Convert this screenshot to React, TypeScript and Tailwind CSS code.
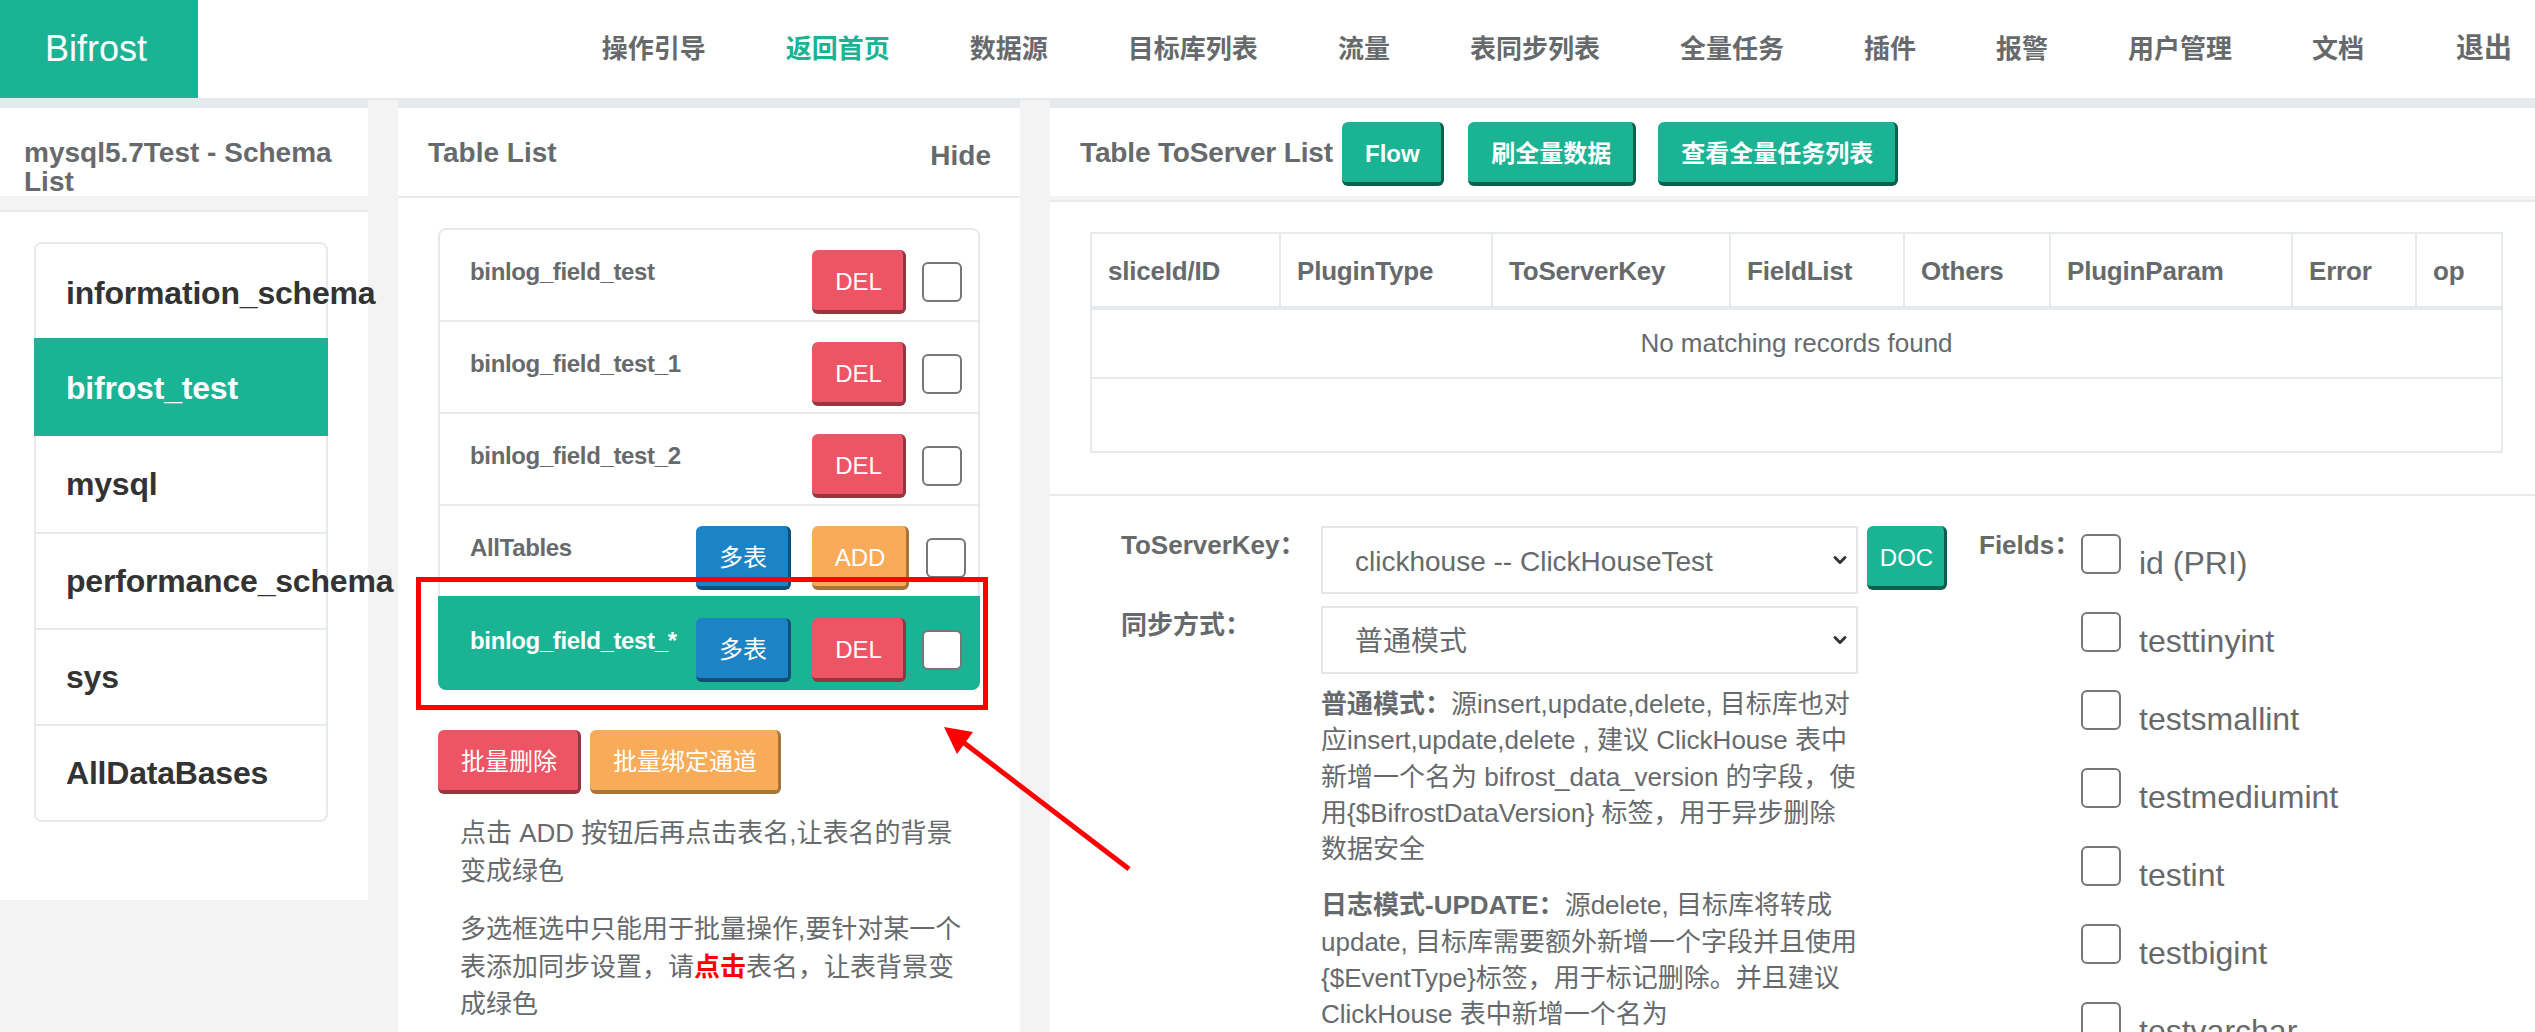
import { ChevronDown } from 'lucide-react';

const NAV_ITEMS = ['操作引导', '返回首页', '数据源', '目标库列表', '流量', '表同步列表', '全量任务', '插件', '报警', '用户管理', '文档'];
const SCHEMAS = ['information_schema', 'bifrost_test', 'mysql', 'performance_schema', 'sys', 'AllDataBases'];
const FIELDS = ['id (PRI)', 'testtinyint', 'testsmallint', 'testmediumint', 'testint', 'testbigint', 'testvarchar'];

const TONES = {
  teal: 'bg-[#1ab394] border-[#0c5e4d]',
  red: 'bg-[#ed5565] border-[#953742]',
  blue: 'bg-[#1c84c6] border-[#0f4f78]',
  orange: 'bg-[#f8ac59] border-[#a7743c]',
} as const;

function Btn({ tone, className = '', children }: { tone: keyof typeof TONES; className?: string; children: React.ReactNode }) {
  return (
    <button className={`h-[64px] shrink-0 rounded-[6px] border-r-[3px] border-b-[4px] pt-[4px] pl-[2px] text-[24px] text-white ${TONES[tone]} ${className}`}>
      {children}
    </button>
  );
}

function Check({ className = '' }: { className?: string }) {
  return (
    <input
      type="checkbox"
      className={`h-[40px] w-[40px] shrink-0 appearance-none rounded-[6px] border-2 border-[#777] bg-white ${className}`}
    />
  );
}

function Select({ value }: { value: string }) {
  return (
    <div className="relative w-[537px]">
      <select className="h-[68px] w-full appearance-none border-2 border-[#e5e6e7] bg-white pt-[3px] pl-[32px] text-[28px]">
        <option>{value}</option>
      </select>
      <ChevronDown className="pointer-events-none absolute top-[24px] right-[8px] h-[20px] w-[20px] text-[#333]" strokeWidth={3.5} />
    </div>
  );
}

function TableRow({ name, active = false, first = false, children }: { name: string; active?: boolean; first?: boolean; children: React.ReactNode }) {
  return (
    <div
      className={`-mb-[2px] flex h-[94px] items-start border-2 pt-[20px] pl-[30px] ${
        active ? 'rounded-b-[8px] border-[#1ab394] bg-[#1ab394] text-white' : 'border-[#e7eaec] text-[#676a6c]'
      } ${first ? 'rounded-t-[8px]' : ''}`}
    >
      <span className={`flex-1 text-[24px] font-bold tracking-[-0.35px] ${active ? 'leading-[45px]' : 'leading-[43px]'}`}>{name}</span>
      {children}
    </div>
  );
}

function Delete() {
  return (
    <>
      <Btn tone="red" className="w-[94px]">DEL</Btn>
      <Check className="mt-[12px] mr-[16px] ml-[16px]" />
    </>
  );
}

export default function App() {
  return (
    <div className="relative flex h-[1032px] w-full flex-col overflow-hidden bg-[#f3f3f4] font-['Liberation_Sans','Noto_Sans_CJK_SC',sans-serif] text-[#676a6c]">
      <nav className="flex h-[100px] shrink-0 items-center justify-between border-b-2 border-[#e7eaec] bg-white">
        <div className="flex h-[98px] w-[198px] items-center bg-[#1ab394] pl-[45px] text-[36px] text-white">Bifrost</div>
        <div className="flex items-center gap-[80px] pr-[23px] text-[26px] font-semibold">
          {NAV_ITEMS.map((item) => (
            <a key={item} className={item === '返回首页' ? 'text-[#1ab394]' : ''}>{item}</a>
          ))}
          <a className="ml-[12px] text-[28px]">退出</a>
        </div>
      </nav>

      <div className="flex min-h-0 flex-1 gap-[30px]">
        <aside className="w-[368px] shrink-0 self-start border-t-8 border-[#e7eaec]">
          <div className="h-[88px] bg-white pt-[30px] pl-[24px] text-[28px] leading-[29px] font-bold">
            mysql5.7Test - Schema<br />List
          </div>
          <div className="mt-[14px] h-[690px] border-t-2 border-[#e7eaec] bg-white pt-[30px] pl-[34px]">
            <div className="w-[294px] rounded-[8px] border-2 border-[#e7eaec]">
              {SCHEMAS.map((schema, i) => (
                <div
                  key={schema}
                  className={`flex items-center whitespace-nowrap text-[32px] font-bold tracking-[-0.2px] ${
                    schema === 'bifrost_test' ? '-mx-[2px] h-[98px] bg-[#1ab394] pt-[2px] pl-[32px] text-white' : 'pl-[30px] text-[#333]'
                  } ${i === 0 ? 'h-[94px] pt-[4px]' : ''} ${i > 1 ? 'h-[96px]' : ''} ${i > 2 ? 'border-t-2 border-[#e7eaec]' : ''}`}
                >
                  {schema}
                </div>
              ))}
            </div>
          </div>
        </aside>

        <section className="w-[622px] shrink-0 border-t-8 border-[#e7eaec] bg-white">
          <div className="flex h-[90px] justify-between border-b-2 border-[#e7eaec] pr-[29px] pl-[30px]">
            <span className="pt-[30px] text-[28px] leading-[29px] font-bold">Table List</span>
            <span className="pt-[33px] text-[28px] leading-[29px] font-bold">Hide</span>
          </div>
          <div className="pt-[30px] pl-[40px]">
            <div className="w-[542px]">
              <TableRow name="binlog_field_test" first><Delete /></TableRow>
              <TableRow name="binlog_field_test_1"><Delete /></TableRow>
              <TableRow name="binlog_field_test_2"><Delete /></TableRow>
              <TableRow name="AllTables">
                <Btn tone="blue" className="mr-[21px] w-[95px]">多表</Btn>
                <Btn tone="orange" className="w-[97px]">ADD</Btn>
                <Check className="mt-[12px] mr-[12px] ml-[17px]" />
              </TableRow>
              <TableRow name="binlog_field_test_*" active>
                <Btn tone="blue" className="mr-[21px] w-[95px]">多表</Btn>
                <Delete />
              </TableRow>
            </div>
            <div className="mt-[42px] flex gap-[9px]">
              <Btn tone="red" className="w-[143px]">批量删除</Btn>
              <Btn tone="orange" className="w-[191px]">批量绑定通道</Btn>
            </div>
            <p className="mt-[21px] w-[516px] pl-[22px] text-[26px] leading-[37.5px]">
              点击 ADD 按钮后再点击表名,让表名的背景变成绿色
            </p>
            <p className="mt-[21px] w-[530px] pl-[22px] text-[26px] leading-[37.5px]">
              多选框选中只能用于批量操作,要针对某一个表添加同步设置，请<b className="text-[#f00]">点击</b>表名，让表背景变成绿色
            </p>
          </div>
        </section>

        <section className="min-w-0 flex-1 border-t-8 border-[#e7eaec] bg-white">
          <div className="flex h-[88px] items-start gap-[9px] pt-[14px] pl-[30px]">
            <span className="pt-[16px] text-[28px] leading-[29px] font-bold tracking-[-0.15px]">Table ToServer List</span>
            <Btn tone="teal" className="w-[102px] font-bold">Flow</Btn>
            <Btn tone="teal" className="ml-[15px] w-[168px] font-bold">刷全量数据</Btn>
            <Btn tone="teal" className="ml-[13px] w-[240px] font-bold">查看全量任务列表</Btn>
          </div>
          <div className="h-[4px] bg-[#f3f3f4]" />
          <div className="h-[296px] border-t-2 border-b-2 border-[#e7eaec] pt-[30px] pl-[40px]">
            <table className="w-[1411px] table-fixed border-collapse text-[26px]">
              <thead className="[&_th]:border-x-2 [&_th]:border-[#e7eaec] [&_th]:pt-[2px] [&_th]:pl-[16px] [&_th]:text-left [&_th]:tracking-[-0.2px]">
                <tr className="h-[75px] border-2 border-b-4 border-[#e7eaec]">
                  <th className="w-[189px]">sliceId/ID</th>
                  <th className="w-[212px]">PluginType</th>
                  <th className="w-[238px]">ToServerKey</th>
                  <th className="w-[174px]">FieldList</th>
                  <th className="w-[146px]">Others</th>
                  <th className="w-[242px]">PluginParam</th>
                  <th className="w-[124px]">Error</th>
                  <th className="w-[86px]">op</th>
                </tr>
              </thead>
              <tbody>
                <tr className="h-[70px] border-2 border-[#e7eaec]">
                  <td colSpan={8} className="text-center">No matching records found</td>
                </tr>
                <tr className="h-[74px] border-2 border-[#e7eaec]">
                  <td colSpan={8} />
                </tr>
              </tbody>
            </table>
          </div>

          <div className="flex pt-[30px] pl-[71px]">
            <div className="w-[858px] shrink-0">
              <div className="flex items-start">
                <label className="w-[200px] text-[26px] leading-[38px] font-bold">ToServerKey：</label>
                <Select value="clickhouse -- ClickHouseTest" />
                <Btn tone="teal" className="ml-[9px] w-[80px]">DOC</Btn>
              </div>
              <div className="mt-[12px] flex items-start">
                <label className="w-[200px] text-[26px] leading-[38px] font-bold">同步方式：</label>
                <Select value="普通模式" />
              </div>
              <div className="mt-[12px] ml-[200px] w-[545px] text-[26px] leading-[36.3px]">
                <p>
                  <b>普通模式：</b>源insert,update,delete, 目标库也对<br />
                  应insert,update,delete , 建议 ClickHouse 表中<br />
                  新增一个名为 bifrost_data_version 的字段，使<br />
                  用{'{$BifrostDataVersion}'} 标签，用于异步删除<br />
                  数据安全
                </p>
                <p className="mt-[20px]">
                  <b>日志模式-UPDATE：</b>源delete, 目标库将转成<br />
                  update, 目标库需要额外新增一个字段并且使用<br />
                  {'{$EventType}'}标签，用于标记删除。并且建议<br />
                  ClickHouse 表中新增一个名为
                </p>
              </div>
            </div>
            <label className="w-[102px] shrink-0 text-[26px] leading-[38px] font-bold">Fields：</label>
            <div>
              {FIELDS.map((field) => (
                <div key={field} className="flex h-[78px] items-start">
                  <Check className="mt-[8px]" />
                  <span className="mt-[14px] ml-[18px] text-[32px] leading-[46px]">{field}</span>
                </div>
              ))}
            </div>
          </div>
        </section>
      </div>

      <div className="absolute top-[577px] left-[416px] h-[133px] w-[572px] border-[5px] border-[#f00]" />
      <svg className="absolute top-[720px] left-[935px]" width="200" height="155" viewBox="0 0 200 155" fill="none">
        <path d="M194 149 L24 19" stroke="#f00" strokeWidth="5" />
        <path d="M9 7 L38 12 L22 34 Z" fill="#f00" />
      </svg>
    </div>
  );
}
